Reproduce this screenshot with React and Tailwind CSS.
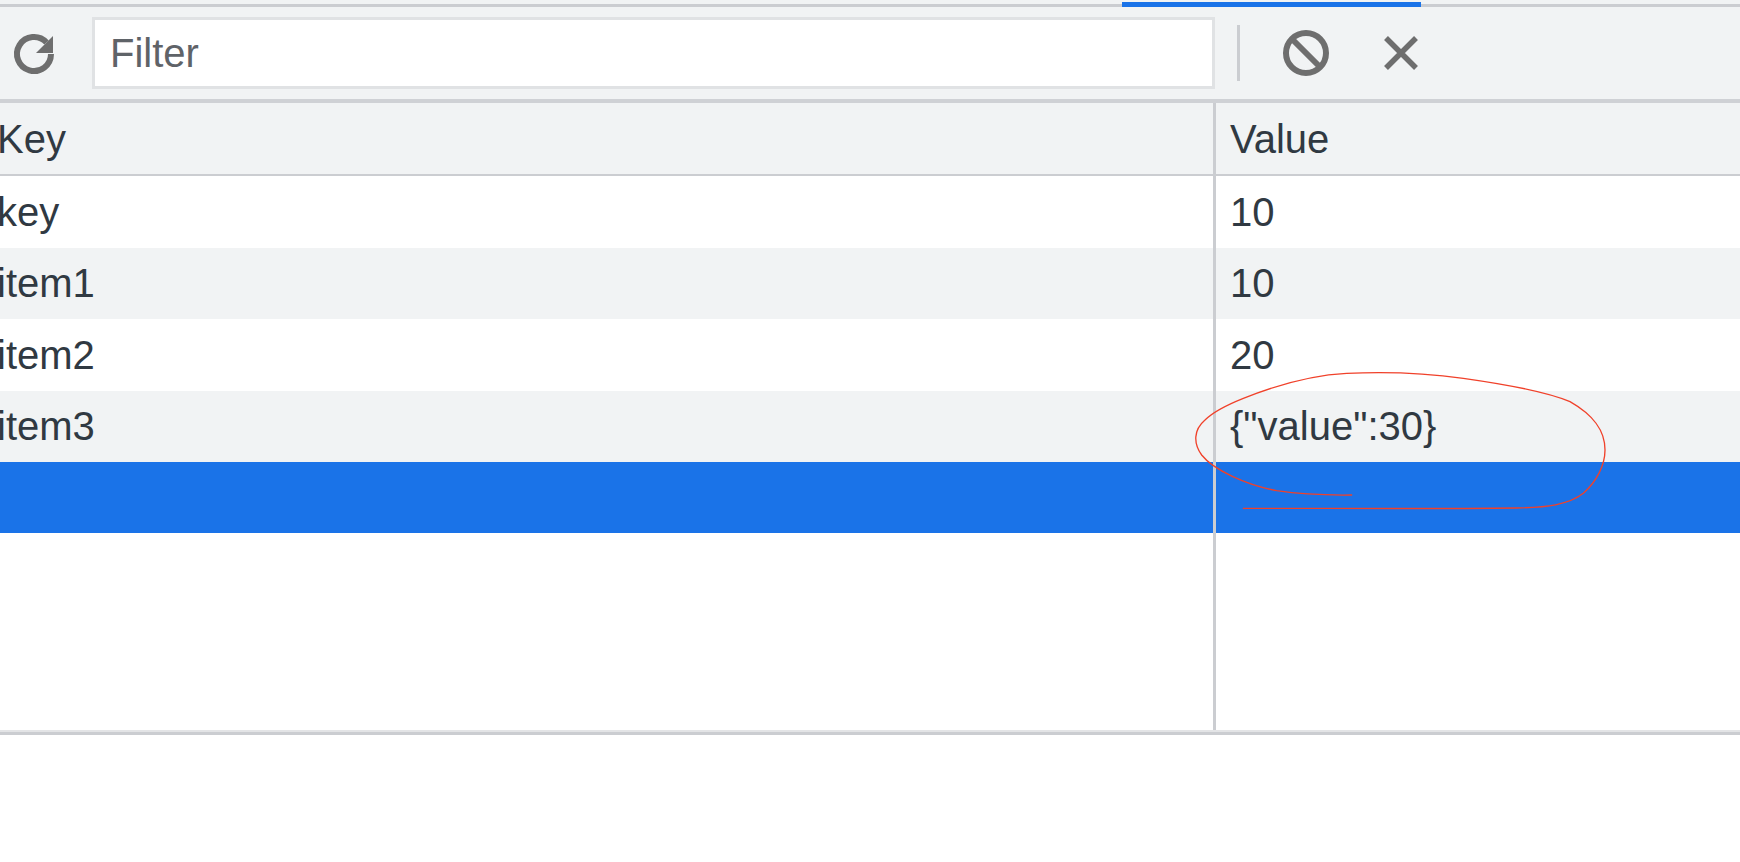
const rows = [
    { key: "key", value: "10", bg: "bg-white" },
    { key: "item1", value: "10", bg: "bg-[#f1f3f4]" },
    { key: "item2", value: "20", bg: "bg-white" },
    { key: "item3", value: '{"value":30}', bg: "bg-[#f1f3f4]" },
];

const RefreshIcon = () => (
    <svg width="48" height="48" viewBox="0 0 48 48" className="shrink-0">
        <path d="M36.5 13.5A17 17 0 1 0 41 25" fill="none" stroke="#6e6e6e" strokeWidth="6" />
        <path d="M43 7v17H26z" fill="#6e6e6e" />
    </svg>
);

const ClearIcon = () => (
    <svg width="48" height="48" viewBox="0 0 48 48" className="shrink-0">
        <circle cx="24" cy="24" r="20" fill="none" stroke="#6e6e6e" strokeWidth="6" />
        <path d="M10 10l28 28" stroke="#6e6e6e" strokeWidth="6" />
    </svg>
);

const CloseIcon = () => (
    <svg width="38" height="38" viewBox="0 0 38 38" className="shrink-0">
        <path d="M4 4l30 30M34 4L4 34" stroke="#6e6e6e" strokeWidth="5.5" />
    </svg>
);

export default function App() {
    return (
        <div className="relative h-[862px] w-[1740px] overflow-hidden bg-white font-['Liberation_Sans',Arial,sans-serif] text-[40px] text-[#303942]">
            <div className="relative h-[7px] border-b-[3px] border-[#cbcdd1] bg-[#f1f3f4]">
                <div className="absolute left-[1122px] top-[2px] h-[5px] w-[299px] bg-[#1a73e8]"></div>
            </div>

            <div className="flex h-[92px] items-center bg-[#f1f3f4]">
                <div className="ml-[10px] flex w-[82px] shrink-0">
                    <RefreshIcon />
                </div>
                <div className="flex h-[72px] w-[1123px] shrink-0 items-center border-[3px] border-[#e0e2e4] bg-white pl-[15px] text-[#5f6368]">
                    Filter
                </div>
                <div className="ml-[22px] h-[56px] w-[3px] shrink-0 bg-[#cbcdd1]"></div>
                <div className="ml-[42px]">
                    <ClearIcon />
                </div>
                <div className="ml-[52px]">
                    <CloseIcon />
                </div>
            </div>

            <div className="h-[4px] bg-[#cfd1d5]"></div>

            <div className="flex h-[73px] border-b-[2px] border-[#cbcdd1] bg-[#f1f3f4]">
                <div className="flex w-[1216px] shrink-0 items-center border-r-[3px] border-[#cbcdd1] pl-0 -indent-[3px]">Key</div>
                <div className="flex items-center pl-[14px]">Value</div>
            </div>

            {rows.map((row) => (
                <div key={row.key} className={`flex h-[71.5px] ${row.bg}`}>
                    <div className="flex w-[1216px] shrink-0 items-center border-r-[3px] border-[#cbcdd1] -indent-[3px]">{row.key}</div>
                    <div className="flex items-center pl-[14px]">{row.value}</div>
                </div>
            ))}

            <div className="flex h-[71px] bg-[#1a73e8]">
                <div className="w-[1216px] shrink-0 border-r-[3px] border-[#cbcdd1]"></div>
            </div>

            <div className="flex h-[197px]">
                <div className="w-[1216px] shrink-0 border-r-[3px] border-[#cbcdd1]"></div>
            </div>

            <div className="h-[5px] border-t-[2px] border-[#e3e4e6] bg-[#cbcdd1]"></div>

            <svg
                width="460"
                height="190"
                viewBox="0 0 1380 570"
                className="pointer-events-none absolute left-[1170px] top-[350px]"
            >
                <path
                    d="M545 435C470 436 400 434 320 422C230 405 130 360 95 315C70 280 70 240 105 210C125 190 170 165 220 145C320 105 430 75 530 70C640 65 760 68 880 85C1000 102 1130 125 1200 155C1270 195 1305 240 1305 300C1305 345 1280 395 1240 430C1195 465 1130 472 1040 474C800 477 500 475 220 475"
                    fill="none"
                    stroke="#f0412a"
                    strokeWidth="4"
                    strokeLinecap="round"
                />
            </svg>
        </div>
    );
}
